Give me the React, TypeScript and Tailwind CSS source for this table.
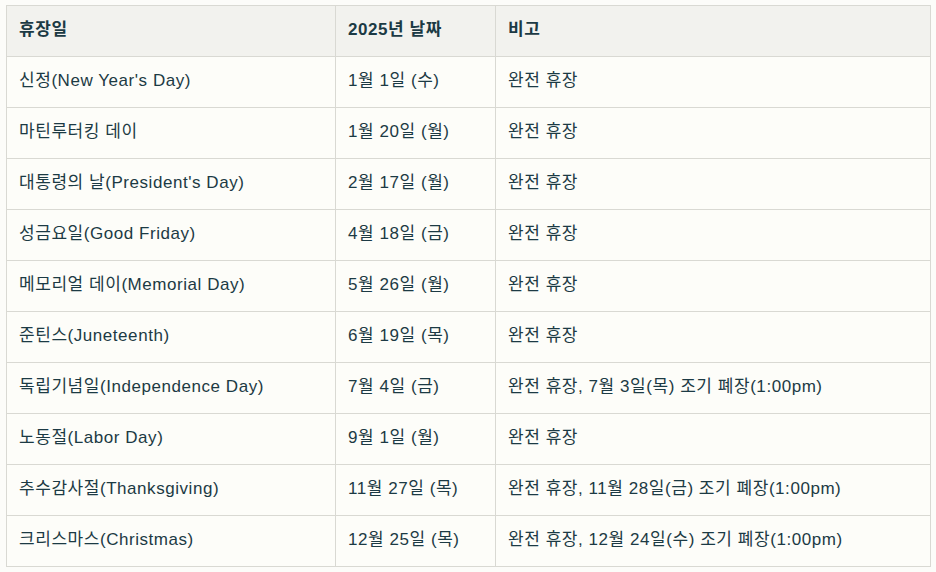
import React from "react";

const holidays = [
  { name: "신정(New Year's Day)", date: "1월 1일 (수)", note: "완전 휴장" },
  { name: "마틴루터킹 데이", date: "1월 20일 (월)", note: "완전 휴장" },
  { name: "대통령의 날(President's Day)", date: "2월 17일 (월)", note: "완전 휴장" },
  { name: "성금요일(Good Friday)", date: "4월 18일 (금)", note: "완전 휴장" },
  { name: "메모리얼 데이(Memorial Day)", date: "5월 26일 (월)", note: "완전 휴장" },
  { name: "준틴스(Juneteenth)", date: "6월 19일 (목)", note: "완전 휴장" },
  { name: "독립기념일(Independence Day)", date: "7월 4일 (금)", note: "완전 휴장, 7월 3일(목) 조기 폐장(1:00pm)" },
  { name: "노동절(Labor Day)", date: "9월 1일 (월)", note: "완전 휴장" },
  { name: "추수감사절(Thanksgiving)", date: "11월 27일 (목)", note: "완전 휴장, 11월 28일(금) 조기 폐장(1:00pm)" },
  { name: "크리스마스(Christmas)", date: "12월 25일 (목)", note: "완전 휴장, 12월 24일(수) 조기 폐장(1:00pm)" },
];

export default function App() {
  return (
    <div
      className="min-h-[572px] w-[936px] bg-[#fcfcf9] pl-[6px] pt-[5px]"
      style={{ fontFamily: '"Liberation Sans", "Noto Sans CJK KR", sans-serif' }}
    >
      <table className="w-[925px] table-fixed border-collapse text-[17px] tracking-[0.55px] text-[#1c3a44]">
        <colgroup>
          <col className="w-[329px]" />
          <col className="w-[160px]" />
          <col />
        </colgroup>
        <thead>
          <tr className="h-[51px] bg-[#f2f2ee]">
            <th className="border border-[#d9d9d3] px-3 pb-[2px] text-left font-bold">휴장일</th>
            <th className="border border-[#d9d9d3] px-3 pb-[2px] text-left font-bold">2025년 날짜</th>
            <th className="border border-[#d9d9d3] px-3 pb-[2px] text-left font-bold">비고</th>
          </tr>
        </thead>
        <tbody className="bg-[#fdfdf9]">
          {holidays.map((h) => (
            <tr key={h.name} className="h-[51px]">
              <td className="border border-[#d9d9d3] px-3 pb-[2px]">{h.name}</td>
              <td className="border border-[#d9d9d3] px-3 pb-[2px]">{h.date}</td>
              <td className="border border-[#d9d9d3] px-3 pb-[2px]">{h.note}</td>
            </tr>
          ))}
        </tbody>
      </table>
    </div>
  );
}
